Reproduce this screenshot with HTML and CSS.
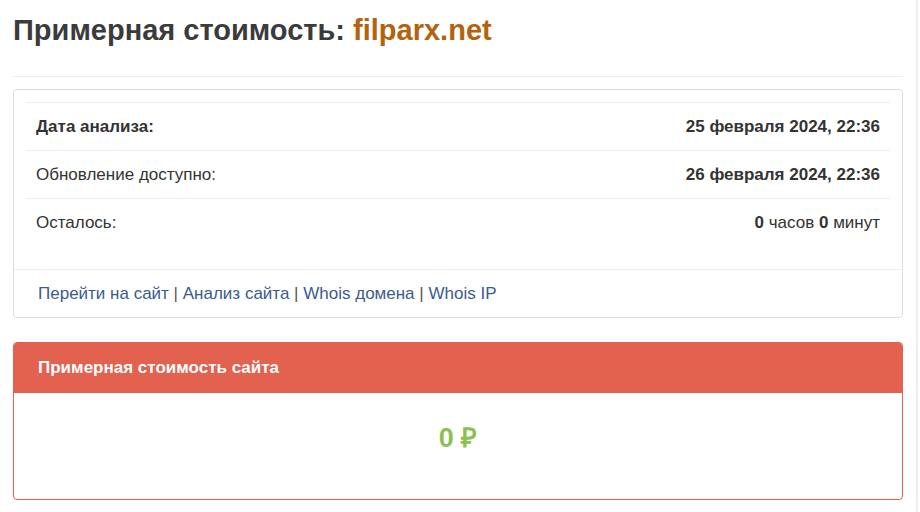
FILE: index.html
```html
<!DOCTYPE html>
<html lang="ru">
<head>
<meta charset="utf-8">
<link rel="stylesheet" href="styles.css">
</head>
<body>
<div class="page">
  <main class="main">
    <h1 class="title">Примерная стоимость: <span class="domain">filparx.net</span></h1>
    <hr class="divider">
    <section class="panel">
      <div class="panel-body">
        <table class="info">
          <tr><th>Дата анализа:</th><td><b>25 февраля 2024, 22:36</b></td></tr>
          <tr><th class="normal">Обновление доступно:</th><td><b>26 февраля 2024, 22:36</b></td></tr>
          <tr><th class="normal">Осталось:</th><td><b>0</b> часов <b>0</b> минут</td></tr>
        </table>
      </div>
      <div class="panel-footer">
        <a href="#">Перейти на сайт</a> | <a href="#">Анализ сайта</a> | <a href="#">Whois домена</a> | <a href="#">Whois IP</a>
      </div>
    </section>
    <section class="panel panel-red">
      <div class="panel-head">Примерная стоимость сайта</div>
      <div class="price-body"><span class="price">0 ₽</span></div>
    </section>
  </main>
</div>
</body>
</html>
```
FILE: styles.css
```css
* { box-sizing: border-box; }
html, body { margin: 0; padding: 0; background: #fff; }
body {
  font-family: "Liberation Sans", Arial, sans-serif;
  color: #333;
  font-size: 17px;
}
.page { width: 918px; height: 512px; overflow: hidden; }
.main {
  width: 918px;
  min-height: 512px;
  padding: 0 13px 0 13px;
  border-right: 2px solid #eee;
}
.title {
  margin: 0;
  padding-top: 11px;
  font-size: 29px;
  line-height: 38px;
  font-weight: bold;
  color: #3b3b3b;
}
.domain { color: #b5620e; }
.divider {
  margin: 27px 0 12px;
  border: 0;
  border-top: 1px solid #eee;
}
.panel {
  border: 1px solid #ddd;
  border-radius: 4px;
  background: #fff;
  margin-bottom: 24px;
}
.panel-body { padding: 12px 12px 0; }
.info {
  width: 100%;
  border-collapse: collapse;
  margin-bottom: 22px;
}
.info th, .info td {
  border-top: 1px solid #eee;
  padding: 0 10px;
  height: 48px;
  line-height: 20px;
  font-size: 17px;
  color: #333;
}
.info th { text-align: left; font-weight: bold; }
.info th.normal { font-weight: normal; }
.info td { text-align: right; }
.panel-footer {
  border-top: 1px solid #eee;
  padding: 14px 24px 13px;
  line-height: 20px;
  font-size: 17px;
  color: #555;
}
.panel-footer a { color: #3b5b8c; text-decoration: none; }
.panel-red { border-color: #e0614f; }
.panel-head {
  background: #e3614f;
  color: #fff;
  font-weight: bold;
  font-size: 17px;
  height: 50px;
  line-height: 50px;
  padding: 0 24px;
  border-radius: 3px 3px 0 0;
}
.price-body {
  height: 106px;
  display: flex;
  align-items: center;
  justify-content: center;
}
.price {
  color: #8cc152;
  font-weight: bold;
  font-size: 27px;
  margin-top: -18px;
}
```
